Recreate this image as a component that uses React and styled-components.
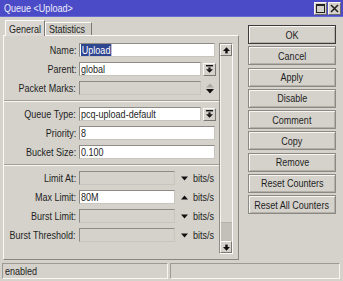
import React from "react";
import styled, { createGlobalStyle } from "styled-components";

const GlobalStyle = createGlobalStyle`
  body {
    margin: 0;
    background: #d5d2cc;
  }
`;

const actions = [
  "OK",
  "Cancel",
  "Apply",
  "Disable",
  "Comment",
  "Copy",
  "Remove",
  "Reset Counters",
  "Reset All Counters",
];

// the dialog font is a narrow sans; no narrow face is installed, so squeeze Liberation Sans
const Narrow = styled.span`
  display: inline-block;
  flex-shrink: 0;
  white-space: nowrap;
  transform: scaleX(0.82);
  transform-origin: ${({ $origin }) => $origin || "left"} center;
`;

const DropIcon = () => (
  <svg width="7" height="8" viewBox="0 0 7 8">
    <rect x="0" y="0" width="7" height="1.4" fill="#111" />
    <rect x="2.4" y="2.4" width="2.2" height="2" fill="#111" />
    <polygon points="0,4.2 7,4.2 3.5,7.8" fill="#111" />
  </svg>
);

const ScrollArrow = ({ down }) => (
  <svg width="7" height="7" viewBox="0 0 7 7" style={down ? { transform: "rotate(180deg)" } : null}>
    <polygon points="0,4 3.5,0.3 7,4" fill="#111" />
    <rect x="2.3" y="3.8" width="2.4" height="2.6" fill="#111" />
  </svg>
);

const Tri = ({ up }) => (
  <svg width="7" height="5" viewBox="0 0 7 5">
    <polygon points={up ? "0,4.5 3.5,0.5 7,4.5" : "0,0.5 7,0.5 3.5,4.5"} fill="#111" />
  </svg>
);

const UpDownIcon = () => (
  <svg width="8" height="11" viewBox="0 0 8 11">
    <polygon points="0,4.5 4,0.5 8,4.5" fill="#aaa7a1" />
    <polygon points="0,6 8,6 4,10.5" fill="#111" />
  </svg>
);

const FieldRow = ({ label, children }) => (
  <Row>
    <Label>
      <Narrow $origin="right">{label}:</Narrow>
    </Label>
    {children}
  </Row>
);

const BitsRow = ({ label, value, up, disabled }) => (
  <FieldRow label={label}>
    <Field $width={96} $disabled={disabled}>
      {value && <Narrow>{value}</Narrow>}
    </Field>
    <Arrow>
      <Tri up={up} />
    </Arrow>
    <Unit>
      <Narrow>bits/s</Narrow>
    </Unit>
  </FieldRow>
);

export default function App() {
  return (
    <Window>
      <GlobalStyle />
      <TitleBar>
        <Narrow>Queue &lt;Upload&gt;</Narrow>
        <TitleButtons>
          <TitleButton>
            <svg width="9" height="9" viewBox="0 0 9 9">
              <rect x="0.5" y="0.5" width="8" height="8" fill="none" stroke="#222" />
              <rect x="0.5" y="0.5" width="8" height="1.5" fill="#222" />
            </svg>
          </TitleButton>
          <TitleButton>
            <svg width="9" height="9" viewBox="0 0 9 9">
              <path d="M1 1 L8 8 M8 1 L1 8" stroke="#222" strokeWidth="1.6" />
            </svg>
          </TitleButton>
        </TitleButtons>
      </TitleBar>

      <Body>
        <LeftCol>
          <Tabs>
            <Tab $active>
              <Narrow>General</Narrow>
            </Tab>
            <Tab>
              <Narrow>Statistics</Narrow>
            </Tab>
          </Tabs>
          <Panel>
            <Form>
              <FieldRow label="Name">
                <Field $width={136}>
                  <Narrow>
                    <Selected>Upload</Selected>
                  </Narrow>
                </Field>
              </FieldRow>
              <FieldRow label="Parent">
                <Field $width={122}>
                  <Narrow>global</Narrow>
                </Field>
                <DropButton>
                  <DropIcon />
                </DropButton>
              </FieldRow>
              <FieldRow label="Packet Marks">
                <Field $width={122} $disabled />
                <IconSlot>
                  <UpDownIcon />
                </IconSlot>
              </FieldRow>
              <Separator />
              <FieldRow label="Queue Type">
                <Field $width={122}>
                  <Narrow>pcq-upload-default</Narrow>
                </Field>
                <DropButton>
                  <DropIcon />
                </DropButton>
              </FieldRow>
              <FieldRow label="Priority">
                <Field $width={136}>
                  <Narrow>8</Narrow>
                </Field>
              </FieldRow>
              <FieldRow label="Bucket Size">
                <Field $width={136}>
                  <Narrow>0.100</Narrow>
                </Field>
              </FieldRow>
              <Separator />
              <BitsRow label="Limit At" disabled />
              <BitsRow label="Max Limit" value="80M" up />
              <BitsRow label="Burst Limit" disabled />
              <BitsRow label="Burst Threshold" disabled />
            </Form>
            <Scrollbar>
              <ScrollButton>
                <ScrollArrow />
              </ScrollButton>
              <Track>
                <Thumb />
              </Track>
              <ScrollButton>
                <ScrollArrow down />
              </ScrollButton>
            </Scrollbar>
          </Panel>
        </LeftCol>

        <Actions>
          {actions.map((a) => (
            <ActionButton key={a} $default={a === "OK"}>
              <Narrow $origin="center">{a}</Narrow>
            </ActionButton>
          ))}
        </Actions>
      </Body>

      <StatusBar>
        <StatusCell $width={166}>
          <Narrow>enabled</Narrow>
        </StatusCell>
        <StatusCell />
      </StatusBar>
    </Window>
  );
}

const Window = styled.div`
  width: 343px;
  height: 281px;
  display: flex;
  flex-direction: column;
  background: #d5d2cc;
  color: #1e1e1e;
  font-family: "Liberation Sans", Arial, sans-serif;
  font-size: 11px;
  overflow: hidden;
`;

const TitleBar = styled.div`
  height: 17px;
  box-sizing: border-box;
  display: flex;
  align-items: center;
  justify-content: space-between;
  padding: 0 2px 0 4px;
  background: #4b4bc8;
  color: #eeeefc;
  border-bottom: 1px solid #6a6ad4;
`;

const TitleButtons = styled.div`
  display: flex;
  gap: 1px;
`;

const TitleButton = styled.div`
  width: 13px;
  height: 13px;
  box-sizing: border-box;
  display: flex;
  align-items: center;
  justify-content: center;
  background: #d5d2cc;
  border: 1px solid;
  border-color: #f4f3f0 #6e6c68 #6e6c68 #f4f3f0;
`;

const Body = styled.div`
  flex: 1;
  display: flex;
  padding: 2px 0 0 3px;
`;

const LeftCol = styled.div`
  width: 236px;
  display: flex;
  flex-direction: column;
`;

const Tabs = styled.div`
  height: 16px;
  display: flex;
  align-items: flex-end;
  padding-left: 2px;
`;

const Tab = styled.div`
  height: ${({ $active }) => ($active ? "16px" : "13px")};
  width: ${({ $active }) => ($active ? "40px" : "47px")};
  box-sizing: border-box;
  padding: ${({ $active }) => ($active ? "2px 3px 0" : "0 3px 0")};
  border: 1px solid;
  border-bottom: none;
  border-color: #fbfaf8 #7a7873 #7a7873 #fbfaf8;
  background: ${({ $active }) => ($active ? "#dbd8d3" : "#d0cdc7")};
  margin-bottom: ${({ $active }) => ($active ? "-1px" : "0")};
  position: relative;
  z-index: ${({ $active }) => ($active ? 1 : 0)};
`;

const Panel = styled.div`
  height: 225px;
  box-sizing: border-box;
  display: flex;
  padding: 7px 5px 5px 0;
  border: 1px solid;
  border-color: #fbfaf8 #8a8782 #8a8782 #fbfaf8;
`;

const Form = styled.div`
  flex: 1;
  display: flex;
  flex-direction: column;
  gap: 5px;
`;

const Row = styled.div`
  height: 14px;
  display: flex;
  align-items: center;
`;

const Label = styled.div`
  width: 72px;
  flex-shrink: 0;
  display: flex;
  justify-content: flex-end;
  margin-right: 3px;
`;

const Field = styled.div`
  width: ${({ $width }) => $width}px;
  height: 14px;
  box-sizing: border-box;
  padding: 0 1px;
  line-height: 12px;
  background: ${({ $disabled }) => ($disabled ? "#d5d2cc" : "#ffffff")};
  border: 1px solid;
  border-color: #8f8c87 #c8c5bf #c8c5bf #8f8c87;
  white-space: nowrap;
  overflow: hidden;
`;

const Selected = styled.span`
  background: #2e4590;
  color: #ffffff;
  padding: 0 1px;
`;

const DropButton = styled.div`
  width: 13px;
  height: 13px;
  margin-left: 2px;
  box-sizing: border-box;
  display: flex;
  align-items: center;
  justify-content: center;
  border: 1px solid;
  border-color: #fbfaf8 #7a7873 #7a7873 #fbfaf8;
`;

const IconSlot = styled.div`
  width: 13px;
  margin-left: 2px;
  display: flex;
  justify-content: center;
`;

const Arrow = styled.div`
  width: 8px;
  margin: 0 5px 0 5px;
  display: flex;
  justify-content: center;
`;

const Unit = styled.span`
  white-space: nowrap;
`;

const Separator = styled.div`
  height: 0;
  border-top: 1px solid #a19e98;
  border-bottom: 1px solid #f7f6f3;
`;

const Scrollbar = styled.div`
  width: 14px;
  box-sizing: border-box;
  display: flex;
  flex-direction: column;
  border: 1px solid;
  border-color: #8f8c87 #fbfaf8 #fbfaf8 #8f8c87;
`;

const ScrollButton = styled.div`
  height: 12px;
  box-sizing: border-box;
  display: flex;
  align-items: center;
  justify-content: center;
  background: #d5d2cc;
  border: 1px solid;
  border-color: #fbfaf8 #7a7873 #7a7873 #fbfaf8;
`;

const Track = styled.div`
  flex: 1;
  display: flex;
  flex-direction: column;
  justify-content: flex-end;
  background: #d9d6d0;
  border-left: 1px solid #f4f3f0;
`;

const Thumb = styled.div`
  height: 18px;
  background: #c3c0b9;
  border-top: 1px solid #b5b2ab;
`;

const Actions = styled.div`
  width: 88px;
  margin-left: 9px;
  padding-top: 6px;
  display: flex;
  flex-direction: column;
  gap: 2.25px;
`;

const ActionButton = styled.div`
  height: 19px;
  box-sizing: border-box;
  display: flex;
  align-items: center;
  justify-content: center;
  white-space: nowrap;
  background: #d5d2cc;
  border: 1px solid ${({ $default }) => ($default ? "#3c3b39" : "#8c8984")};
  box-shadow: inset 1px 1px 0 #f7f6f3, inset -1px -1px 0 #b3b0aa;
`;

const StatusBar = styled.div`
  height: 19px;
  box-sizing: border-box;
  display: flex;
  gap: 2px;
  padding: 1px 3px 2px 2px;
`;

const StatusCell = styled.div`
  ${({ $width }) => ($width ? `width: ${$width}px;` : "flex: 1;")}
  box-sizing: border-box;
  padding-left: 2px;
  line-height: 14px;
  border: 1px solid;
  border-color: #9d9a94 #f7f6f3 #f7f6f3 #9d9a94;
`;
